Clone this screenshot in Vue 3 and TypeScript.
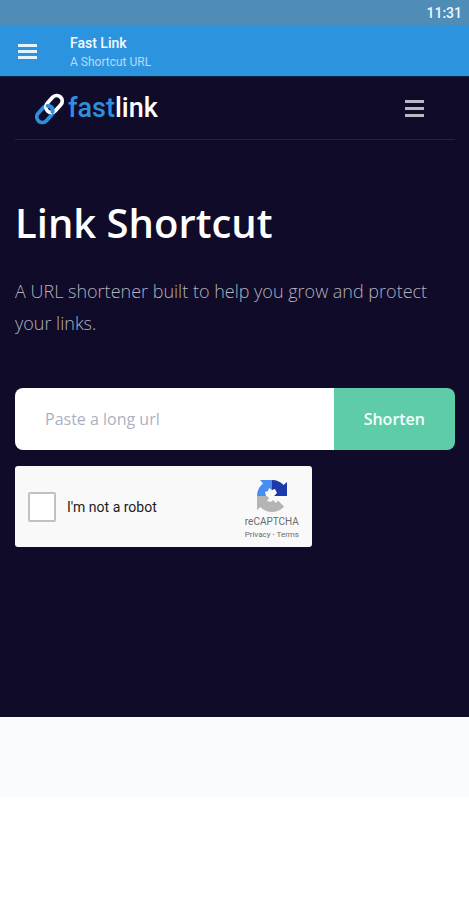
<script setup lang="ts">
import { ref } from 'vue'

const longUrl = ref('')
const isHuman = ref(false)
</script>

<template>
  <div class="screen">
    <div class="status-bar"><time>11:31</time></div>

    <header class="app-bar">
      <button class="icon-button" type="button" aria-label="Open app menu">
        <svg width="19" height="16" viewBox="0 0 19 16" fill="#e4f3fd">
          <rect width="19" height="3" y="0" />
          <rect width="19" height="3" y="6" />
          <rect width="19" height="3" y="12" />
        </svg>
      </button>
      <div class="app-titles">
        <div class="app-title">Fast Link</div>
        <div class="app-subtitle">A Shortcut URL</div>
      </div>
    </header>

    <main class="hero">
      <nav class="site-nav">
        <a class="brand" href="#">
          <svg class="brand-mark" width="30" height="32" viewBox="0 0 30 32" fill="none" stroke-width="3.8" stroke-linecap="round">
            <rect x="0.5" y="15.500" width="19" height="11" rx="5.500" transform="rotate(-48 10 21)" stroke="#2f8fdc" />
            <rect x="9.500" y="5.500" width="19" height="11" rx="5.500" transform="rotate(-48 19 11)" stroke="#fff" />
            <path d="M12.500 12.800 C15.500 13 18.500 15.500 17.500 19" stroke="#2f8fdc" />
          </svg>
          <span class="brand-name"><span class="brand-fast">fast</span>link</span>
        </a>
        <button class="icon-button" type="button" aria-label="Open site menu">
          <svg width="19" height="18" viewBox="0 0 19 18" fill="#b9b8c3">
            <rect width="19" height="3" y="0" />
            <rect width="19" height="3" y="7" />
            <rect width="19" height="3" y="14" />
          </svg>
        </button>
      </nav>

      <h1>Link Shortcut</h1>
      <p class="lead">A URL shortener built to help you grow and protect your links.</p>

      <form @submit.prevent>
        <div class="url-field">
          <input v-model="longUrl" type="text" placeholder="Paste a long url" aria-label="Paste a long url" />
          <button type="submit">Shorten</button>
        </div>

        <div class="captcha">
          <label class="captcha-label">
            <input v-model="isHuman" type="checkbox" />
            <span>I'm not a robot</span>
          </label>
          <div class="captcha-brand">
            <svg width="30" height="32" viewBox="0 0 30 32">
              <path fill="#4a8df0" d="M15 0 H3 L6 3.500 C2 6.500 0 11 0 16 H9 L8 12 L11 11 L12 8 L15 10 Z" />
              <path fill="#1c3aa9" d="M15 0 C20 0 24 2 26.500 5 L30 2 V16 H17 L20 13 L18 9 L15 10 Z" />
              <path fill="#b4b4b4" d="M0 16 H10 L12 18 L10 21 L14 22 L16 20 L19 23 L21 20.500 L27 26.500 C21 34 9 33.500 3.500 27 L0 30 Z" />
            </svg>
            <div class="captcha-name">reCAPTCHA</div>
            <div class="captcha-links"><a href="#">Privacy</a> - <a href="#">Terms</a></div>
          </div>
        </div>
      </form>
    </main>

    <section class="next-section"></section>
  </div>
</template>

<style>
body {
  margin: 0;
  background: #fff;
}
</style>

<style scoped>
.screen {
  font-family: "Open Sans", "Noto Sans", sans-serif;
}

a {
  color: inherit;
  text-decoration: none;
}

button {
  border: 0;
  cursor: pointer;
}

.icon-button {
  display: flex;
  padding: 0;
  background: none;
}

.status-bar {
  display: flex;
  justify-content: flex-end;
  padding: 2px 7px 0;
  background: #508db6;
  color: #eef6fb;
  font: 500 14px/23px Roboto, sans-serif;
}

.app-bar {
  display: flex;
  align-items: center;
  gap: 33px;
  padding: 8px 19px 5px 18px;
  background: #2c94df;
  color: #f4faff;
  font-family: Roboto, sans-serif;
}

.app-title {
  font-size: 14px;
  font-weight: 500;
  line-height: 20px;
}

.app-subtitle {
  color: #b5daf5;
  font-size: 12px;
  line-height: 18px;
}

.hero {
  padding: 0 14px 170px 15px;
  border-top: 1px solid #0b2440;
  background: #0f0b29;
}

.site-nav {
  display: flex;
  align-items: center;
  justify-content: space-between;
  padding: 13px 31px 12px 20px;
  border-bottom: 1px solid #24203d;
}

.brand {
  display: flex;
  align-items: center;
  gap: 3px;
}

.brand-name {
  color: #fff;
  font: 500 27px/37px Roboto, sans-serif;
}

.brand-fast {
  color: #2f8fdc;
}

h1 {
  margin: 53px 0 0;
  color: #fff;
  font-size: 40px;
  font-weight: 600;
  line-height: 60px;
}

.lead {
  margin: 22px 0 0;
  color: #b3b1be;
  font-size: 18px;
  font-weight: 300;
  line-height: 32px;
}

.url-field {
  display: flex;
  margin-top: 49px;
  overflow: hidden;
  border-radius: 8px;
}

.url-field input {
  flex: 1;
  min-width: 0;
  padding: 0 30px;
  border: 0;
  background: #fff;
  color: #30304a;
  font: 400 16px/62px "Open Sans", sans-serif;
}

.url-field input::placeholder {
  color: #abb1c1;
  opacity: 1;
}

.url-field button {
  padding: 0 30px;
  background: #5fcca9;
  color: #f5fffb;
  font: 600 16px/62px "Open Sans", sans-serif;
}

.captcha {
  display: flex;
  align-items: center;
  justify-content: space-between;
  box-sizing: border-box;
  max-width: 297px;
  margin-top: 16px;
  padding: 14px 13px 6px 13px;
  border-radius: 3px;
  background: #f9f9f9;
  color: #1c1c1c;
  font-family: Roboto, sans-serif;
}

.captcha-label {
  display: flex;
  align-items: center;
  gap: 11px;
  margin-bottom: 8px;
  font-size: 14px;
}

.captcha-label input {
  appearance: none;
  box-sizing: border-box;
  width: 28px;
  height: 30px;
  margin: 0;
  border: 2px solid #c1c1c1;
  border-radius: 2px;
  background: #fff;
}

.captcha-label input:checked {
  background: #5fcca9;
}

.captcha-brand {
  display: flex;
  flex-direction: column;
  align-items: center;
  color: #6b6b6b;
}

.captcha-name {
  margin-top: 3px;
  font-size: 10px;
  line-height: 14px;
}

.captcha-links {
  font-size: 8px;
  line-height: 12px;
}

.next-section {
  height: 80px;
  background: #fafbfe;
}
</style>
